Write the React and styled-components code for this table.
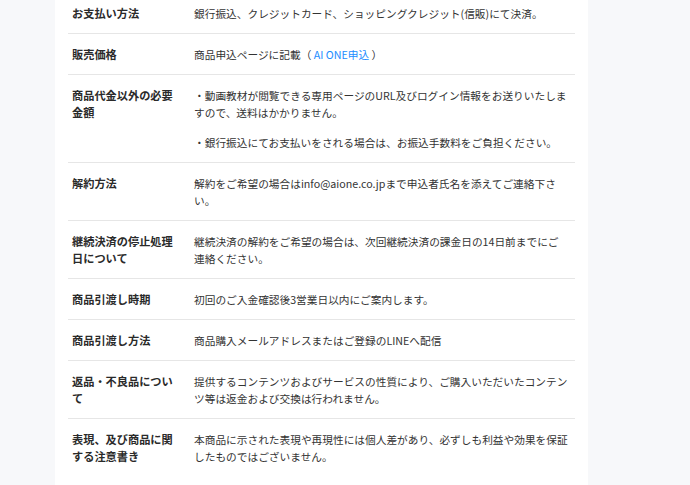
import React from 'react';
import styled, { createGlobalStyle } from 'styled-components';

const GlobalStyle = createGlobalStyle`
  html, body {
    margin: 0;
    padding: 0;
    background: #f7f8fa;
    overflow: hidden;
  }
  body {
    font-family: "Noto Sans CJK JP", "Noto Sans", sans-serif;
    color: #333;
  }
`;

const ROWS = [
  {
    label: 'お支払い方法',
    value: ['銀行振込、クレジットカード、ショッピングクレジット(信販)にて決済。'],
  },
  {
    label: '販売価格',
    link: true,
  },
  {
    label: '商品代金以外の必要金額',
    value: [
      '・動画教材が閲覧できる専用ページのURL及びログイン情報をお送りいたしますので、送料はかかりません。',
      '・銀行振込にてお支払いをされる場合は、お振込手数料をご負担ください。',
    ],
  },
  {
    label: '解約方法',
    value: ['解約をご希望の場合はinfo@aione.co.jpまで申込者氏名を添えてご連絡下さい。'],
  },
  {
    label: '継続決済の停止処理日について',
    value: ['継続決済の解約をご希望の場合は、次回継続決済の課金日の14日前までにご連絡ください。'],
  },
  {
    label: '商品引渡し時期',
    value: ['初回のご入金確認後3営業日以内にご案内します。'],
  },
  {
    label: '商品引渡し方法',
    value: ['商品購入メールアドレスまたはご登録のLINEへ配信'],
  },
  {
    label: '返品・不良品について',
    value: ['提供するコンテンツおよびサービスの性質により、ご購入いただいたコンテンツ等は返金および交換は行われません。'],
  },
  {
    label: '表現、及び商品に関する注意書き',
    value: ['本商品に示された表現や再現性には個人差があり、必ずしも利益や効果を保証したものではございません。'],
  },
];

export default function App() {
  return (
    <>
      <GlobalStyle />
      <Page>
        <Panel>
          <List>
            {ROWS.map(row => (
              <Row key={row.label}>
                <Label>{row.label}</Label>
                <Value>
                  {row.link ? (
                    <p>
                      商品申込ページに記載（ <Link href="#">AI ONE申込</Link> ）
                    </p>
                  ) : (
                    row.value.map(text => <p key={text}>{text}</p>)
                  )}
                </Value>
              </Row>
            ))}
          </List>
        </Panel>
      </Page>
    </>
  );
}

const Page = styled.div`
  display: flex;
  height: 485px;
  padding-left: 55px;
`;

const Panel = styled.div`
  width: 533px;
  height: 100%;
  background: #fff;
  padding: 0 13px;
  box-sizing: border-box;
`;

const List = styled.dl`
  margin: -7px 0 0 0;
  padding: 0;
`;

const Row = styled.div`
  display: grid;
  grid-template-columns: 110px 374px;
  column-gap: 12px;
  padding: 12px 4px 11px;
  border-bottom: 1px solid #e6e6e6;
  line-height: 17px;

  &:last-child {
    border-bottom: none;
  }
`;

const Label = styled.dt`
  font-size: 11.2px;
  font-weight: 700;
  color: #2a2a2a;
`;

const Value = styled.dd`
  margin: 0;
  font-size: 10.7px;
  color: #333;

  p {
    margin: 0;
  }
  p + p {
    margin-top: 13px;
  }
`;

const Link = styled.a`
  color: #1a8cff;
  text-decoration: none;
`;
